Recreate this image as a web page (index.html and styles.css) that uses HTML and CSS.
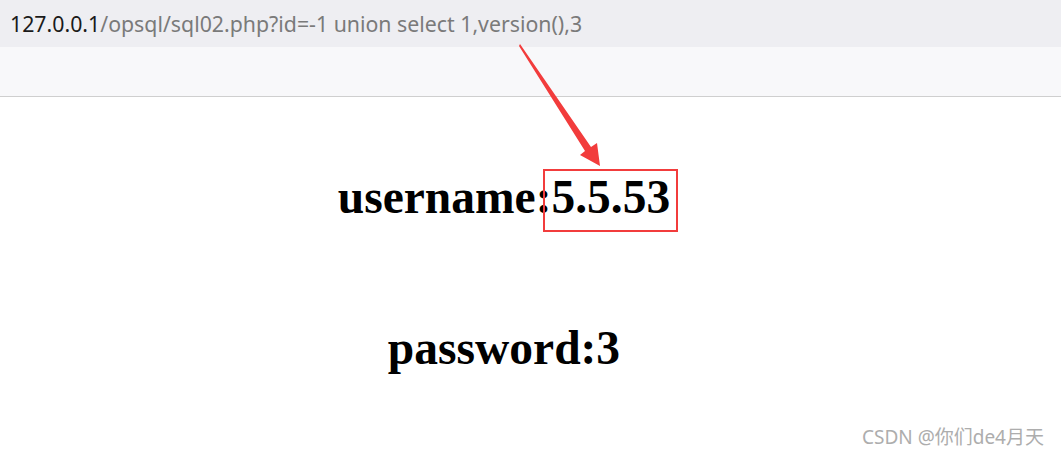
FILE: index.html
```html
<!DOCTYPE html>
<html>
<head>
  <meta charset="utf-8">
  <link rel="stylesheet" href="styles.css">
</head>
<body>
  <div class="address-bar">
    <span class="host">127.0.0.1</span><span class="path">/opsql/sql02.php?id=-1 union select 1,version(),3</span>
  </div>
  <div class="toolbar"></div>

  <main class="page">
    <h1 class="field">username:<span class="value">5.5.53</span></h1>
    <h1 class="field">password:3</h1>
  </main>

  <!-- annotation overlay -->
  <div class="mark-box"></div>
  <svg class="mark-arrow" width="1061" height="458" viewBox="0 0 1061 458">
    <polygon points="520,44 591,147 597,143 600,166 580,155 585,151 519,46" fill="#f23c3c"/>
  </svg>

  <div class="watermark">CSDN @你们de4月天</div>
</body>
</html>
```

FILE: styles.css
```css
/* Base */
body {
  margin: 0;
  background: #fff;
  font-family: "Liberation Serif", serif;
  overflow: hidden;
}

/* Browser chrome */
.address-bar {
  height: 47px;
  box-sizing: border-box;
  padding: 11px 0 0 10px;
  background: #eeeef2;
  font: 21.3px "Noto Sans", "Noto Sans CJK SC", sans-serif;
  line-height: 26px;
  white-space: nowrap;
}

.host {
  color: #1a1a1a;
}

.path {
  color: #7a7a7a;
}

.toolbar {
  height: 49px;
  background: #f8f8fa;
  border-bottom: 1px solid #cfcfcf;
}

/* Page content */
.page {
  width: 1008px;
  text-align: center;
  padding-top: 73px;
}

.field {
  margin: 0 0 97px;
  font-size: 47.5px;
  font-weight: bold;
  line-height: 54px;
  color: #000;
}

/* Annotation */
.mark-box {
  position: absolute;
  left: 543px;
  top: 169px;
  width: 131px;
  height: 59px;
  border: 2px solid #f23c3c;
}

.mark-arrow {
  position: absolute;
  left: 0;
  top: 0;
  pointer-events: none;
}

.watermark {
  position: absolute;
  right: 17px;
  bottom: 8px;
  font: 19px "Noto Sans", "Noto Sans CJK SC", sans-serif;
  color: #adadad;
}
```
